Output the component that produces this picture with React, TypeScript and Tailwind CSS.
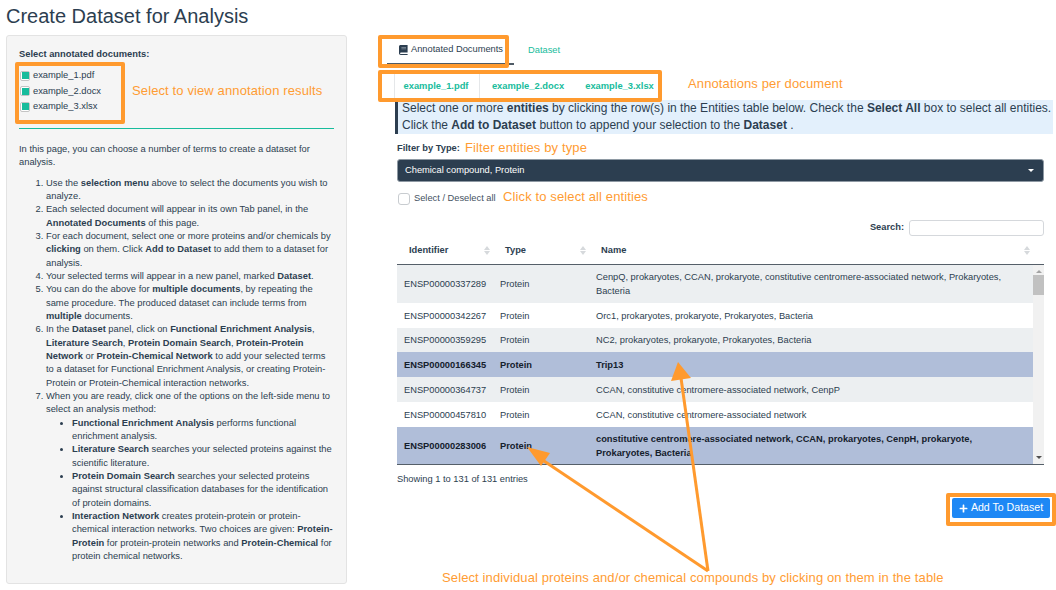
import { FaPlus } from "react-icons/fa";

const font = "font-['Liberation_Sans',Arial,sans-serif]";

type Row = { id: string; name: string[]; selected?: boolean; h: string };

const rows: Row[] = [
  { id: "ENSP00000337289", name: ["CenpQ, prokaryotes, CCAN, prokaryote, constitutive centromere-associated network, Prokaryotes,", "Bacteria"], h: "h-[38px]" },
  { id: "ENSP00000342267", name: ["Orc1, prokaryotes, prokaryote, Prokaryotes, Bacteria"], h: "h-[25px]" },
  { id: "ENSP00000359295", name: ["NC2, prokaryotes, prokaryote, Prokaryotes, Bacteria"], h: "h-[24px]" },
  { id: "ENSP00000166345", name: ["Trip13"], selected: true, h: "h-[25px]" },
  { id: "ENSP00000364737", name: ["CCAN, constitutive centromere-associated network, CenpP"], h: "h-[25px]" },
  { id: "ENSP00000457810", name: ["CCAN, constitutive centromere-associated network"], h: "h-[25px]" },
  { id: "ENSP00000283006", name: ["constitutive centromere-associated network, CCAN, prokaryotes, CenpH, prokaryote,", "Prokaryotes, Bacteria"], selected: true, h: "h-[37px]" },
];

const Note = ({ className, children }: { className: string; children: string }) => (
  <span className={`absolute whitespace-nowrap text-[13px] leading-[16px] tracking-[0.12px] text-[#ff9c33] ${className}`}>{children}</span>
);

const Box = ({ className }: { className: string }) => (
  <div className={`absolute rounded-[2px] border-[4px] border-[#ff9a2e] ${className}`} />
);

const Check = ({ label }: { label: string }) => (
  <div className="flex h-[15.5px] items-center gap-[3px]">
    <span className="mb-[1px] flex h-[10px] w-[10px] items-center justify-center rounded-[2px] border border-[#c4c4c4] bg-white">
      <span className="h-[7px] w-[7px] bg-[#18bc9c]" />
    </span>
    <span>{label}</span>
  </div>
);

const Sort = () => (
  <span className="flex flex-col gap-[1px]">
    <span className="h-0 w-0 border-x-[3px] border-b-[4px] border-x-transparent border-b-[#d6d9dc]" />
    <span className="h-0 w-0 border-x-[3px] border-t-[4px] border-x-transparent border-t-[#d6d9dc]" />
  </span>
);

const BookIcon = () => (
  <svg width="9" height="10" viewBox="0 0 9 10">
    <path d="M1.6 0H8.6V7.6H2C1.4 7.6 1.1 8 1.1 8.4S1.4 9.1 2 9.1H8.6V10H1.8C.8 10 0 9.3 0 8.3V1.6C0 .7.7 0 1.6 0Z" fill="#2c3e50" />
    <path d="M2.4 2H7V2.7H2.4ZM2.4 3.6H7V4.3H2.4Z" fill="#8895a1" />
  </svg>
);

const Sidebar = () => (
  <aside className="ml-[6px] h-[549px] w-[341px] rounded-[3px] border border-[#e3e3e3] bg-[#f5f5f5] px-[12px] pt-[12px] text-[9.35px] leading-[13.35px] text-[#2c3e50]">
    <b className="block">Select annotated documents:</b>
    <div className="mt-[7px] ml-[1px]">
      <Check label="example_1.pdf" />
      <Check label="example_2.docx" />
      <Check label="example_3.xlsx" />
    </div>
    <div className="mt-[13px] h-px bg-[#18bc9c]" />
    <p className="mt-[14px] w-[300px]">In this page, you can choose a number of terms to create a dataset for analysis.</p>
    <ol className="mt-[7px] list-decimal pl-[27px]">
      <li>Use the <b>selection menu</b> above to select the documents you wish to analyze.</li>
      <li>Each selected document will appear in its own Tab panel, in the <b>Annotated Documents</b> of this page.</li>
      <li>For each document, select one or more proteins and/or chemicals by <b>clicking</b> on them. Click <b>Add to Dataset</b> to add them to a dataset for analysis.</li>
      <li>Your selected terms will appear in a new panel, marked <b>Dataset</b>.</li>
      <li>You can do the above for <b>multiple documents</b>, by repeating the same procedure. The produced dataset can include terms from <b>multiple</b> documents.</li>
      <li>In the <b>Dataset</b> panel, click on <b>Functional Enrichment Analysis</b>, <b>Literature Search</b>, <b>Protein Domain Search</b>, <b>Protein-Protein Network</b> or <b>Protein-Chemical Network</b> to add your selected terms to a dataset for Functional Enrichment Analysis, or creating Protein-Protein or Protein-Chemical interaction networks.</li>
      <li>When you are ready, click one of the options on the left-side menu to select an analysis method:
        <ul className="list-disc pl-[26px]">
          <li><b>Functional Enrichment Analysis</b> performs functional enrichment analysis.</li>
          <li><b>Literature Search</b> searches your selected proteins against the scientific literature.</li>
          <li><b>Protein Domain Search</b> searches your selected proteins against structural classification databases for the identification of protein domains.</li>
          <li><b>Interaction Network</b> creates protein-protein or protein-chemical interaction networks. Two choices are given: <b>Protein-Protein</b> for protein-protein networks and <b>Protein-Chemical</b> for protein chemical networks.</li>
        </ul>
      </li>
    </ol>
  </aside>
);

const EntityTable = () => (
  <div className="relative text-[9.3px] leading-[14px] text-[#2c3e50]">
    <div className="flex h-[24px] w-[636px] items-center pb-[4px] font-bold">
      <div className="flex w-[96px] items-center justify-between pr-[3px] pl-[12px]">Identifier<Sort /></div>
      <div className="flex w-[96px] items-center justify-between pr-[3px] pl-[12px]">Type<Sort /></div>
      <div className="flex flex-1 items-center justify-between pr-[3px] pl-[12px]">Name<Sort /></div>
    </div>
    <div className="flex h-[201px] w-[647px] border-t border-b border-t-[#555f69] border-b-[#555f69]">
      <div className="w-[636px]">
        {rows.map((r, i) => (
          <div
            key={r.id}
            className={`flex items-center ${r.h} ${r.selected ? "bg-[#b0bed9] font-bold text-[#14202c]" : i % 2 === 0 ? "bg-[#eceff1]" : "bg-white"}`}
          >
            <div className="w-[96px] pl-[7px]">{r.id}</div>
            <div className="w-[96px] pl-[7px]">Protein</div>
            <div className="flex-1 pl-[7px]">
              {r.name.map((line) => (
                <div key={line} className="whitespace-nowrap">{line}</div>
              ))}
            </div>
          </div>
        ))}
      </div>
      <div className="relative w-[11px] bg-[#f1f1f1]">
        <span className="absolute top-[5px] left-[3px] h-0 w-0 border-x-[3px] border-b-[3px] border-x-transparent border-b-[#a3a3a3]" />
        <div className="absolute top-[10px] h-[20px] w-[11px] bg-[#c1c1c1]" />
        <span className="absolute bottom-[5px] left-[3px] h-0 w-0 border-x-[3px] border-t-[3px] border-x-transparent border-t-[#505050]" />
      </div>
    </div>
  </div>
);

const Main = () => (
  <main className="ml-[33px] flex-1 text-[#2c3e50]">
    <nav className="flex h-[29px] items-start text-[9.3px]">
      <div className="ml-[7px] flex h-[30px] w-[127px] items-center gap-[3px] border-b-2 border-[#4f5b66] pt-[2px] pl-[12px]">
        <BookIcon />
        Annotated Documents
      </div>
      <div className="ml-[14px] flex h-[30px] items-center pt-[2px] text-[#18bc9c]">Dataset</div>
    </nav>
    <div className="mt-[9px] ml-[14px] flex h-[27px] items-center border-l border-[#e5e7e9] text-[9.35px] font-bold text-[#18bc9c]">
      <div className="flex h-full w-[85px] items-center justify-center border-r border-[#e5e7e9] pr-[2px]">example_1.pdf</div>
      <div className="flex h-full w-[96px] items-center justify-center">example_2.docx</div>
      <div className="flex h-full w-[87px] items-center justify-center">example_3.xlsx</div>
    </div>
    <div className="ml-[15px] h-[34px] w-[658px] border-l-[3px] border-[#2c3e50] bg-[#e3f0fc] pl-[4px] text-[12px] leading-[17px] whitespace-nowrap">
      <div>Select one or more <b>entities</b> by clicking the row(s) in the Entities table below. Check the <b>Select All</b> box to select all entities.</div>
      <div>Click the <b>Add to Dataset</b> button to append your selection to the <b>Dataset</b> .</div>
    </div>
    <div className="ml-[17px] w-[647px]">
      <b className="mt-[8px] block text-[9.3px] leading-[12px]">Filter by Type:</b>
      <div className="mt-[5px] flex h-[23px] items-center justify-between rounded-[3px] border border-[#8e99a3] bg-[#2c3e50] pr-[9px] pl-[7px] text-[9.3px] text-white">
        Chemical compound, Protein
        <span className="h-0 w-0 border-x-[3px] border-t-[3px] border-x-transparent border-t-white" />
      </div>
      <div className="mt-[10px] flex h-[14px] items-center gap-[4px] pl-[1px] text-[9.3px] text-[#44525f]">
        <span className="h-[12px] w-[12px] rounded-[3px] border border-[#c8ccd0] bg-white" />
        Select / Deselect all
      </div>
      <div className="mt-[14px] flex h-[16px] items-center justify-end gap-[5px] text-[9.3px] font-bold">
        Search:
        <span className="h-[16px] w-[135px] rounded-[3px] border border-[#d5d8dc] bg-white" />
      </div>
      <div className="mt-[4px]">
        <EntityTable />
      </div>
      <p className="mt-[8px] text-[9.3px] leading-[12px]">Showing 1 to 131 of 131 entries</p>
      <div className="mt-[13px] flex justify-end">
        <button className="mr-[-6px] flex h-[20px] w-[98px] items-center justify-center gap-[3px] rounded-[2px] bg-[#1e88f5] text-[10.6px] text-white">
          <FaPlus size={9} />Add To Dataset
        </button>
      </div>
    </div>
  </main>
);

// orange callouts drawn on top of the screenshot
const Callouts = () => (
  <>
    <Box className="top-[62px] left-[15px] h-[62px] w-[110px]" />
    <Box className="top-[35px] left-[378px] h-[33px] w-[131px]" />
    <Box className="top-[70px] left-[378px] h-[32px] w-[284px]" />
    <Box className="top-[493px] left-[946px] h-[33px] w-[110px]" />
    <Note className="top-[83px] left-[132px]">Select to view annotation results</Note>
    <Note className="top-[76px] left-[688px]">Annotations per document</Note>
    <Note className="top-[140px] left-[465px]">Filter entities by type</Note>
    <Note className="top-[189px] left-[503px]">Click to select all entities</Note>
    <Note className="top-[570px] left-[442px]">Select individual proteins and/or chemical compounds by clicking on them in the table</Note>
    <svg className="pointer-events-none absolute top-0 left-0" width="1056" height="590">
      <g stroke="#ff9a2e" strokeWidth="3" fill="none">
        <path d="M708 571 L681 378" />
        <path d="M708 571 L541 459" />
      </g>
      <g fill="#ff9a2e">
        <path d="M678 362 L671 381 L691 378 Z" />
        <path d="M527 447 L541 466 L550 453 Z" />
      </g>
    </svg>
  </>
);

export default function App() {
  return (
    <div className={`relative h-[590px] w-[1056px] overflow-hidden bg-white ${font}`}>
      <h1 className="ml-[6px] h-[35px] pt-[3px] text-[20px] leading-[26px] text-[#2c3e50]">Create Dataset for Analysis</h1>
      <div className="flex">
        <Sidebar />
        <Main />
      </div>
      <Callouts />
    </div>
  );
}
